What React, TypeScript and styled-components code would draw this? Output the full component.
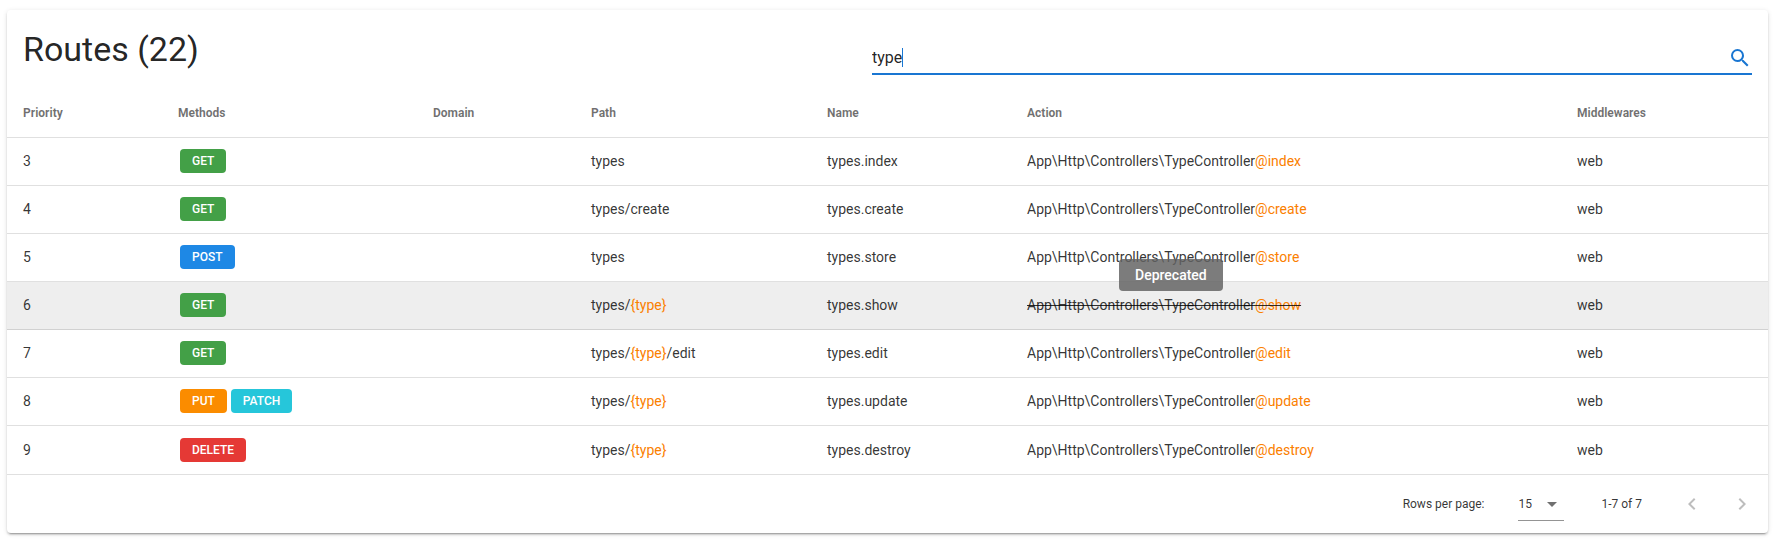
import React, { useState } from "react";
import styled, { createGlobalStyle } from "styled-components";

const colors = {
  text: "rgba(0, 0, 0, 0.87)",
  body: "rgba(0, 0, 0, 0.8)",
  muted: "rgba(0, 0, 0, 0.56)",
  divider: "rgba(0, 0, 0, 0.12)",
  primary: "#1976d2",
  accent: "#fb8000",
};

const methodColors = {
  GET: "#43a047",
  POST: "#1e88e5",
  PUT: "#fb8c00",
  PATCH: "#26c6da",
  DELETE: "#e53935",
};

type Method = keyof typeof methodColors;

interface Route {
  priority: number;
  methods: Method[];
  path: string;
  name: string;
  action: string;
  deprecated?: boolean;
}

const controller = "App\\Http\\Controllers\\TypeController";

const routes: Route[] = [
  { priority: 3, methods: ["GET"], path: "types", name: "types.index", action: "@index" },
  { priority: 4, methods: ["GET"], path: "types/create", name: "types.create", action: "@create" },
  { priority: 5, methods: ["POST"], path: "types", name: "types.store", action: "@store" },
  { priority: 6, methods: ["GET"], path: "types/{type}", name: "types.show", action: "@show", deprecated: true },
  { priority: 7, methods: ["GET"], path: "types/{type}/edit", name: "types.edit", action: "@edit" },
  { priority: 8, methods: ["PUT", "PATCH"], path: "types/{type}", name: "types.update", action: "@update" },
  { priority: 9, methods: ["DELETE"], path: "types/{type}", name: "types.destroy", action: "@destroy" },
];

const columns = [
  { label: "Priority", width: 155 },
  { label: "Methods", width: 255 },
  { label: "Domain", width: 158 },
  { label: "Path", width: 236 },
  { label: "Name", width: 200 },
  { label: "Action", width: 550 },
  { label: "Middlewares", width: 207 },
];

const GlobalStyle = createGlobalStyle`
  *, *::before, *::after { box-sizing: border-box; }
  body {
    margin: 0;
    background: #fff;
    color: ${colors.text};
    font-family: Roboto, "Liberation Sans", sans-serif;
    font-size: 14px;
  }
`;

const Card = styled.main`
  margin: 10px 12px 12px 7px;
  background: #fff;
  border-radius: 4px;
  box-shadow: 0 3px 1px -2px rgba(0, 0, 0, 0.2), 0 2px 2px 0 rgba(0, 0, 0, 0.14),
    0 1px 5px 0 rgba(0, 0, 0, 0.12);
`;

const CardHeader = styled.header`
  display: grid;
  grid-template-columns: 849fr 880fr;
  align-items: center;
  padding: 16px 16px 15px;
`;

const Title = styled.h1`
  margin: 0;
  padding-bottom: 4px;
  font-size: 34px;
  font-weight: 400;
  line-height: 40px;
`;

const SearchField = styled.label`
  display: flex;
  align-items: center;
  height: 49px;
  padding-top: 16px;
  border-bottom: 2px solid ${colors.primary};
  cursor: text;
`;

const SearchInput = styled.input`
  field-sizing: content;
  min-width: 1px;
  padding: 0;
  border: 0;
  outline: 0;
  background: transparent;
  color: ${colors.text};
  caret-color: transparent;
  font: 16px/20px Roboto, "Liberation Sans", sans-serif;
`;

const Caret = styled.span`
  width: 1px;
  height: 19px;
  background: ${colors.primary};
`;

const Icon = styled.svg`
  display: block;
  width: 24px;
  height: 24px;
  fill: currentColor;
`;

const SearchIcon = styled(Icon)`
  margin-left: auto;
  color: ${colors.primary};
`;

const Table = styled.table`
  width: 100%;
  table-layout: fixed;
  border-spacing: 0;
`;

const HeaderCell = styled.th`
  height: 48px;
  padding: 0 16px 2px;
  border-bottom: 1px solid ${colors.divider};
  color: ${colors.muted};
  font-size: 12px;
  font-weight: 700;
  text-align: left;
`;

const Cell = styled.td`
  height: 48px;
  padding: 0 16px 1px;
  border-bottom: 1px solid ${colors.divider};
  color: ${colors.body};
  white-space: nowrap;
`;

const Row = styled.tr<{ $active?: boolean }>`
  background: ${(p) => (p.$active ? "#eee" : "transparent")};

  &:last-child ${Cell} {
    border-bottom: 0;
  }
`;

const Methods = styled.div`
  display: flex;
  gap: 4px;
  padding-left: 2px;
`;

const Chip = styled.span<{ $method: Method }>`
  padding: 0 12px;
  border-radius: 4px;
  background: ${(p) => methodColors[p.$method]};
  color: #fff;
  font-size: 12px;
  font-weight: 500;
  line-height: 24px;
`;

const Accent = styled.span`
  color: ${colors.accent};
`;

const Action = styled.span<{ $deprecated?: boolean }>`
  text-decoration: ${(p) => (p.$deprecated ? "line-through" : "none")};
`;

const TooltipAnchor = styled.div`
  position: relative;
`;

const Tooltip = styled.div`
  position: absolute;
  bottom: 100%;
  left: 92px;
  margin-bottom: 6px;
  padding: 0 16px;
  border-radius: 4px;
  background: rgba(97, 97, 97, 0.83);
  color: #fff;
  font-weight: 500;
  line-height: 32px;
`;

const Footer = styled.footer`
  display: flex;
  align-items: center;
  justify-content: flex-end;
  height: 59px;
  padding: 0 8px;
  border-top: 1px solid ${colors.divider};
  color: ${colors.body};
  font-size: 12px;
`;

const PageSize = styled.label`
  display: flex;
  align-items: center;
  gap: 34px;
`;

const SelectBox = styled.span`
  position: relative;
  display: block;
  width: 46px;
  color: ${colors.muted};
`;

const Select = styled.select`
  appearance: none;
  display: block;
  width: 100%;
  height: 33px;
  padding: 0;
  border: 0;
  border-bottom: 1px solid rgba(0, 0, 0, 0.42);
  border-radius: 0;
  background: transparent;
  color: ${colors.body};
  font: 12px/32px Roboto, "Liberation Sans", sans-serif;
`;

const SelectArrow = styled(Icon)`
  position: absolute;
  top: 4px;
  right: 0;
  pointer-events: none;
`;

const PageRange = styled.span`
  margin: 0 32px 0 37px;
`;

const Pager = styled.nav`
  display: flex;
  gap: 14px;
`;

const PagerButton = styled.button`
  display: grid;
  place-items: center;
  width: 36px;
  height: 36px;
  padding: 0;
  border: 0;
  border-radius: 50%;
  background: transparent;
  color: rgba(0, 0, 0, 0.26);
`;

function Path({ value }: { value: string }) {
  return (
    <>
      {value.split(/(\{\w+\})/).map((part, i) =>
        part.startsWith("{") ? <Accent key={i}>{part}</Accent> : part,
      )}
    </>
  );
}

function RouteRow({ route }: { route: Route }) {
  return (
    <Row $active={route.deprecated}>
      <Cell>{route.priority}</Cell>
      <Cell>
        <Methods>
          {route.methods.map((m) => (
            <Chip key={m} $method={m}>{m}</Chip>
          ))}
        </Methods>
      </Cell>
      <Cell />
      <Cell><Path value={route.path} /></Cell>
      <Cell>{route.name}</Cell>
      <Cell>
        <TooltipAnchor>
          <Action $deprecated={route.deprecated}>
            {controller}
            <Accent>{route.action}</Accent>
          </Action>
          {route.deprecated && <Tooltip role="tooltip">Deprecated</Tooltip>}
        </TooltipAnchor>
      </Cell>
      <Cell>web</Cell>
    </Row>
  );
}

export default function App() {
  const [query, setQuery] = useState("type");
  const visible = routes.filter((r) => r.name.includes(query));

  return (
    <>
      <GlobalStyle />
      <Card>
        <CardHeader>
          <Title>Routes (22)</Title>
          <SearchField>
            <SearchInput
              type="text"
              aria-label="Search"
              value={query}
              onChange={(e) => setQuery(e.target.value)}
            />
            <Caret />
            <SearchIcon viewBox="0 0 24 24" aria-hidden="true">
              <path d="M9.5 3A6.5 6.5 0 0 1 16 9.5c0 1.61-.59 3.09-1.56 4.23l.27.27h.79l5 5-1.5 1.5-5-5v-.79l-.27-.27A6.516 6.516 0 0 1 9.5 16 6.5 6.5 0 0 1 3 9.5 6.5 6.5 0 0 1 9.5 3m0 2C7 5 5 7 5 9.5S7 14 9.5 14 14 12 14 9.5 12 5 9.5 5z" />
            </SearchIcon>
          </SearchField>
        </CardHeader>
        <Table>
          <colgroup>
            {columns.map((c) => (
              <col key={c.label} width={c.width} />
            ))}
          </colgroup>
          <thead>
            <tr>
              {columns.map((c) => (
                <HeaderCell key={c.label} scope="col">{c.label}</HeaderCell>
              ))}
            </tr>
          </thead>
          <tbody>
            {visible.map((r) => (
              <RouteRow key={r.priority} route={r} />
            ))}
          </tbody>
        </Table>
        <Footer>
          <PageSize>
            Rows per page:
            <SelectBox>
              <Select defaultValue="15">
                <option>5</option>
                <option>10</option>
                <option>15</option>
              </Select>
              <SelectArrow viewBox="0 0 24 24" aria-hidden="true">
                <path d="M7 10l5 5 5-5z" />
              </SelectArrow>
            </SelectBox>
          </PageSize>
          <PageRange>1-7 of 7</PageRange>
          <Pager aria-label="Pagination">
            <PagerButton type="button" disabled aria-label="Previous page">
              <Icon viewBox="0 0 24 24" aria-hidden="true">
                <path d="M15.41 16.58L10.83 12l4.58-4.59L14 6l-6 6 6 6z" />
              </Icon>
            </PagerButton>
            <PagerButton type="button" disabled aria-label="Next page">
              <Icon viewBox="0 0 24 24" aria-hidden="true">
                <path d="M8.59 16.58L13.17 12 8.59 7.41 10 6l6 6-6 6z" />
              </Icon>
            </PagerButton>
          </Pager>
        </Footer>
      </Card>
    </>
  );
}
